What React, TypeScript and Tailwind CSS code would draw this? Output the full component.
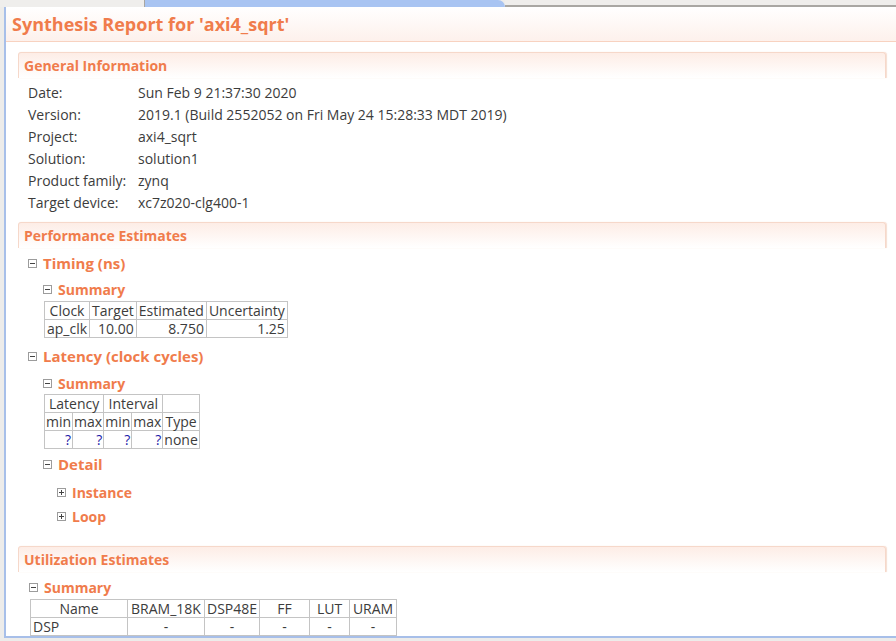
import React from 'react'

const orange = 'text-[#f07c4c]'

function Toggle({ open = true }: { open?: boolean }) {
  return (
    <svg width="9" height="9" viewBox="0 0 9 9" className="shrink-0">
      <rect x="0.5" y="0.5" width="8" height="8" fill="#fff" stroke="#9c9c9c" />
      <line x1="2" y1="4.5" x2="7" y2="4.5" stroke="#444" />
      {!open && <line x1="4.5" y1="2" x2="4.5" y2="7" stroke="#444" />}
    </svg>
  )
}

function SectionHeader({ title, className = '' }: { title: string; className?: string }) {
  return (
    <div
      className={`ml-[12px] mr-[10px] h-[26px] flex items-center pl-[5px] rounded-t-[3px] border border-b-0 border-[#f6d8ca] bg-gradient-to-b from-[#fdede6] to-white shadow-[1px_0_1px_rgba(240,200,180,0.6)] ${className}`}
    >
      <span className={`font-bold text-[14px] ${orange}`}>{title}</span>
    </div>
  )
}

function Node({
  title,
  indent,
  size = 'sm',
  open = true,
  className = '',
}: {
  title: string
  indent: number
  size?: 'sm' | 'lg'
  open?: boolean
  className?: string
}) {
  return (
    <div className={`flex items-center h-[22px] gap-[6px] ${className}`} style={{ paddingLeft: indent }}>
      <Toggle open={open} />
      <span className={`font-bold ${size === 'lg' ? 'text-[15px]' : 'text-[14px]'} ${orange}`}>{title}</span>
    </div>
  )
}

const info = [
  ['Date:', 'Sun Feb 9 21:37:30 2020'],
  ['Version:', '2019.1 (Build 2552052 on Fri May 24 15:28:33 MDT 2019)'],
  ['Project:', 'axi4_sqrt'],
  ['Solution:', 'solution1'],
  ['Product family:', 'zynq'],
  ['Target device:', 'xc7z020-clg400-1'],
]

const td = 'border border-[#c4c4c4] px-[2px] h-[18px] leading-[16px] whitespace-nowrap'
const tdn = 'border border-[#c4c4c4] px-[1px] h-[18px] leading-[16px] whitespace-nowrap'

export default function App() {
  return (
    <div
      className="w-[896px] h-[641px] flex flex-col bg-[#edecea] overflow-hidden text-[#3c3c3c]"
      style={{ fontFamily: '"Open Sans", sans-serif' }}
    >
      {/* tab strip */}
      <div className="h-[7px] flex shrink-0">
        <div className="w-[145px] bg-[#efeeec] border-r border-[#a8a6a2]" />
        <div className="w-[360px] bg-[#a8c4f2] rounded-tr-[10px]" />
        <div className="flex-1 bg-[#efeeec] border-b-2 border-[#a9a7a3]" />
      </div>

      <div className="flex-1 ml-[4px] mb-[3px] border-l-2 border-b-2 border-[#a7bfe9] bg-white overflow-hidden">
        {/* title band */}
        <div className="h-[35px] flex items-center pl-[6px] bg-gradient-to-b from-white to-[#fdf1ec] border-b border-[#f8d2c0]">
          <span className={`font-bold text-[18px] ${orange}`}>Synthesis Report for 'axi4_sqrt'</span>
        </div>

        <SectionHeader title="General Information" className="mt-[10px]" />
        <div className="pl-[22px] pt-[3px] text-[14px]">
          {info.map(([k, v]) => (
            <div key={k} className="flex h-[22px] items-center">
              <span className="w-[110px]">{k}</span>
              <span>{v}</span>
            </div>
          ))}
        </div>

        <SectionHeader title="Performance Estimates" className="mt-[9px]" />
        <Node title="Timing (ns)" indent={22} size="lg" className="mt-[4px]" />
        <Node title="Summary" indent={37} className="mt-[4px]" />
        <table className="ml-[38px] mt-[1px] border-collapse text-[14px]">
          <tbody>
            <tr>
              <td className={`${td} text-center`}>Clock</td>
              <td className={`${td} text-center`}>Target</td>
              <td className={`${td} text-center`}>Estimated</td>
              <td className={`${td} text-center`}>Uncertainty</td>
            </tr>
            <tr>
              <td className={td}>ap_clk</td>
              <td className={`${td} text-right`}>10.00</td>
              <td className={`${td} text-right`}>8.750</td>
              <td className={`${td} text-right`}>1.25</td>
            </tr>
          </tbody>
        </table>

        <Node title="Latency (clock cycles)" indent={22} size="lg" className="mt-[7px]" />
        <Node title="Summary" indent={37} className="mt-[5px]" />
        <table className="ml-[38px] mt-[0px] border-collapse text-[14px]">
          <tbody>
            <tr>
              <td colSpan={2} className={`${tdn} text-center`}>Latency</td>
              <td colSpan={2} className={`${tdn} text-center`}>Interval</td>
              <td className={tdn}></td>
            </tr>
            <tr>
              <td className={`${tdn} text-center`}>min</td>
              <td className={`${tdn} text-center`}>max</td>
              <td className={`${tdn} text-center`}>min</td>
              <td className={`${tdn} text-center`}>max</td>
              <td className={`${tdn} text-center`}>Type</td>
            </tr>
            <tr>
              {[0, 1, 2, 3].map((i) => (
                <td key={i} className={`${tdn} text-right text-[#1a1aa8]`}>?</td>
              ))}
              <td className={tdn}>none</td>
            </tr>
          </tbody>
        </table>
        <Node title="Detail" indent={37} size="lg" className="mt-[4px]" />
        <Node title="Instance" indent={51} open={false} className="mt-[6px]" />
        <Node title="Loop" indent={51} open={false} className="mt-[2px]" />

        <SectionHeader title="Utilization Estimates" className="mt-[19px]" />
        <Node title="Summary" indent={23} className="mt-[4px]" />
        <table className="ml-[24px] mt-[1px] border-collapse text-[14px]">
          <tbody>
            <tr>
              <td className={`${td} text-center w-[97px]`}>Name</td>
              <td className={`${td} text-center w-[77px]`}>BRAM_18K</td>
              <td className={`${td} text-center w-[55px]`}>DSP48E</td>
              <td className={`${td} text-center w-[50px]`}>FF</td>
              <td className={`${td} text-center w-[40px]`}>LUT</td>
              <td className={`${td} text-center w-[47px]`}>URAM</td>
            </tr>
            <tr>
              <td className={td}>DSP</td>
              {[0, 1, 2, 3, 4].map((i) => (
                <td key={i} className={`${td} text-center`}>-</td>
              ))}
            </tr>
            <tr>
              {[0, 1, 2, 3, 4, 5].map((i) => (
                <td key={i} className={td}></td>
              ))}
            </tr>
          </tbody>
        </table>
      </div>
    </div>
  )
}
